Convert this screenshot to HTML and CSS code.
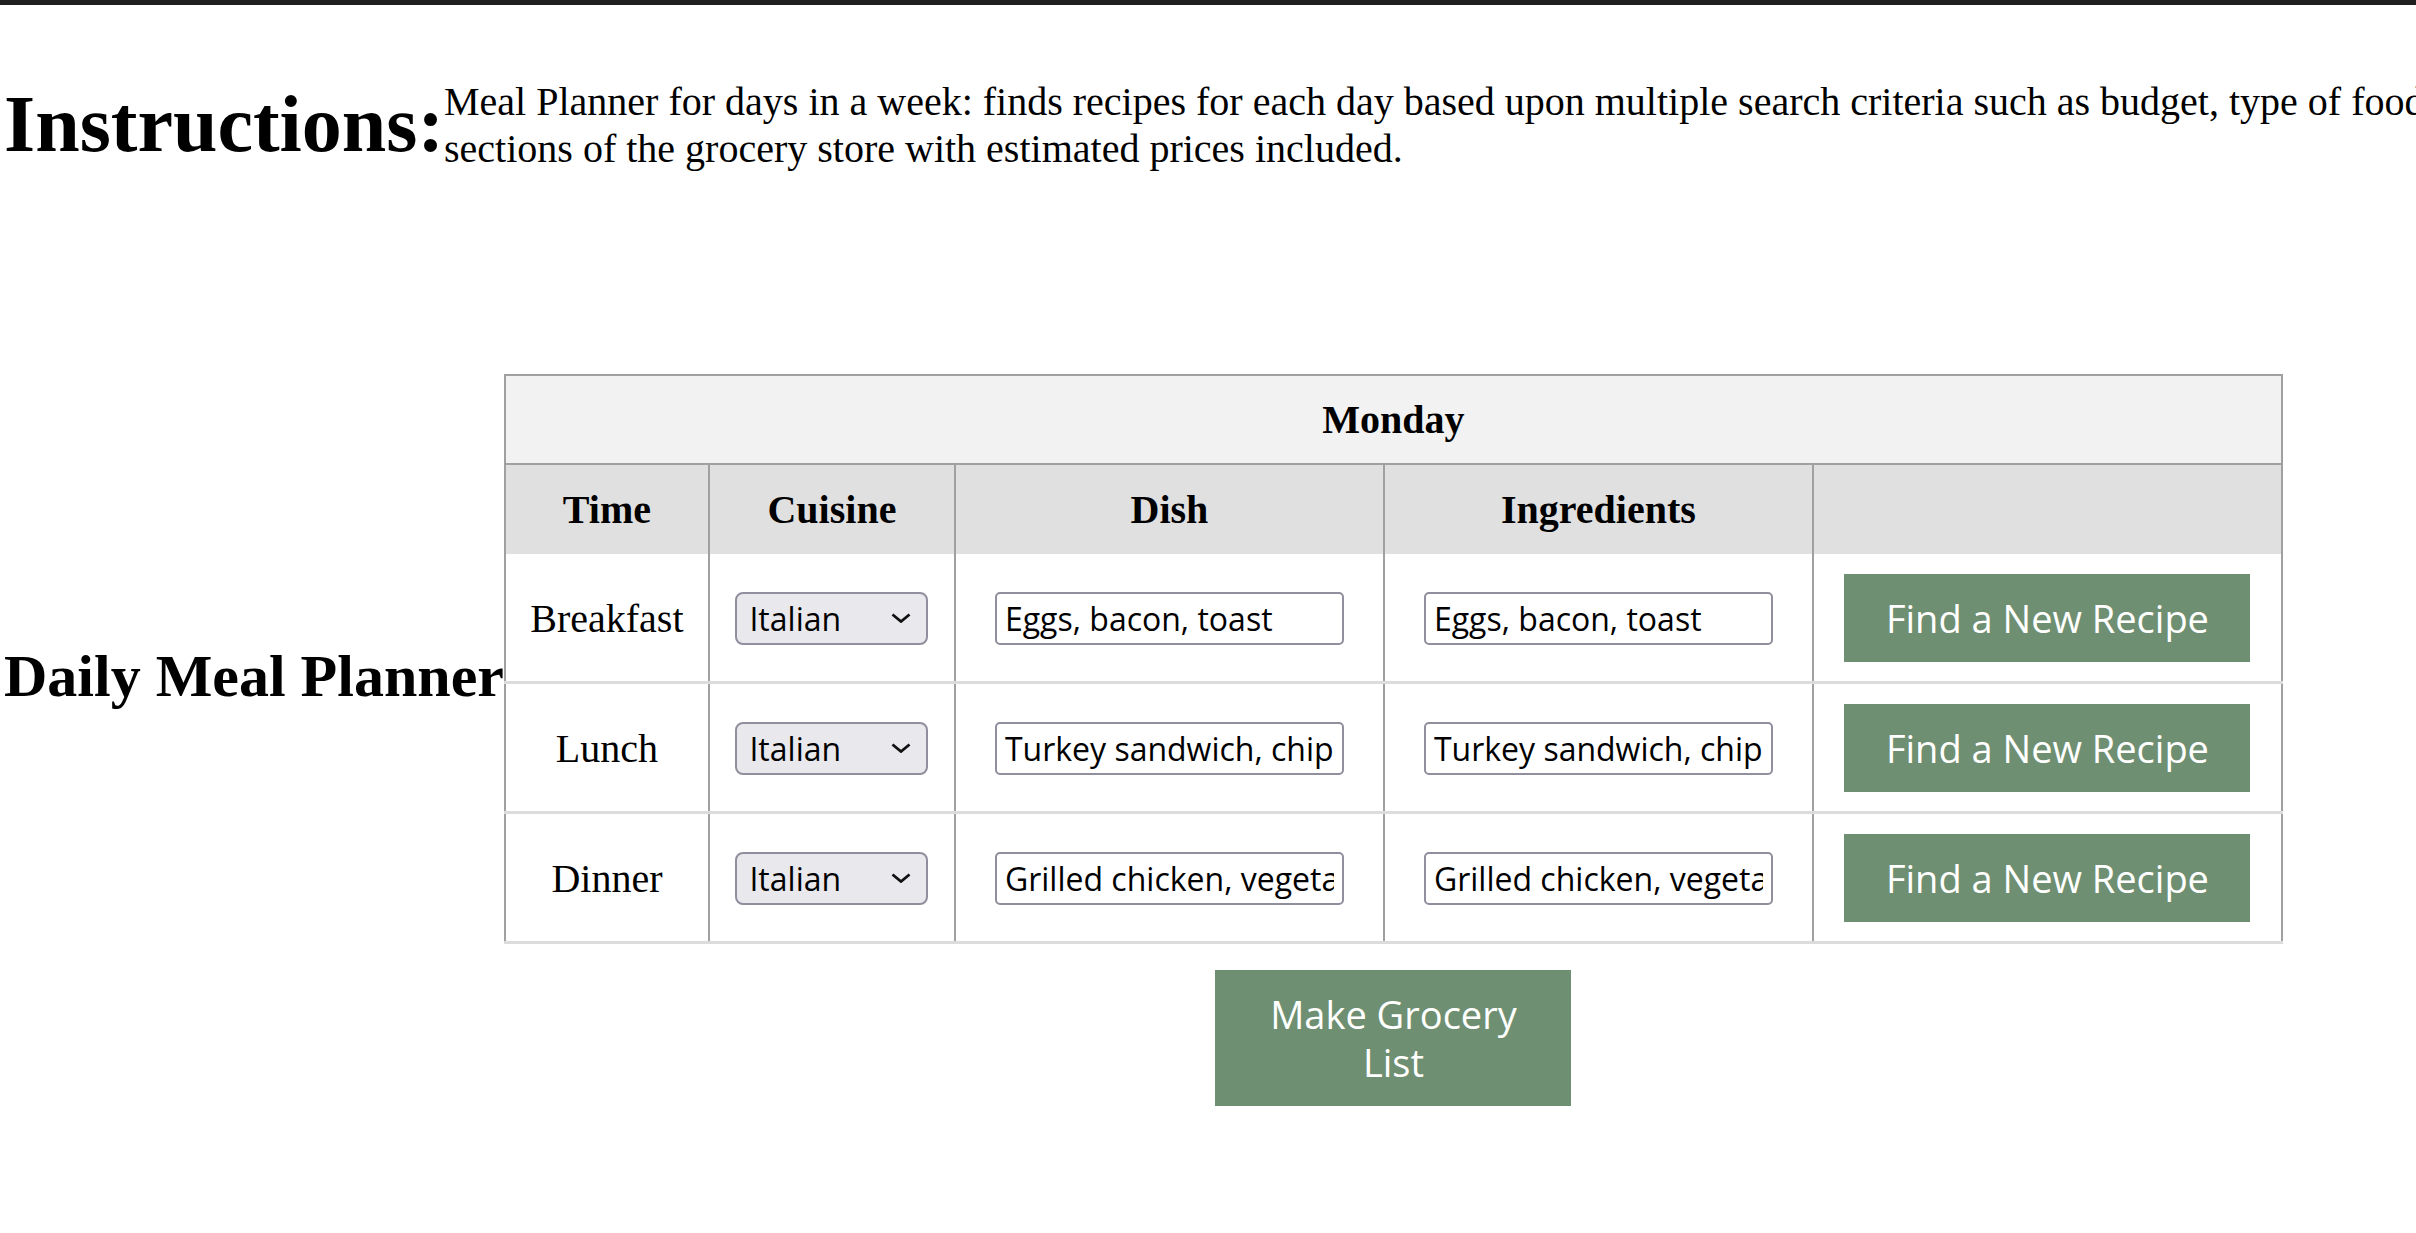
FILE: index.html
```html
<!DOCTYPE html>
<html lang="en">
<head>
<meta charset="utf-8">
<title>Daily Meal Planner</title>
<link rel="stylesheet" href="styles.css">
</head>
<body>
<div class="topbar"></div>
<header class="intro">
  <h1 class="intro-title">Instructions:</h1>
  <p class="intro-text">Meal Planner for days in a week: finds recipes for each day based upon multiple search criteria such as budget, type of food, and preparation time, then builds a grocery list sorted into<br>sections of the grocery store with estimated prices included.</p>
</header>
<main class="planner">
  <h2 class="planner-title">Daily Meal Planner</h2>
  <div class="planner-body">
    <table class="meal-table">
      <colgroup>
        <col class="col-time">
        <col class="col-cuisine">
        <col class="col-dish">
        <col class="col-ingr">
        <col class="col-action">
      </colgroup>
      <thead>
        <tr class="day-row"><th colspan="5">Monday</th></tr>
        <tr class="head-row"><th>Time</th><th>Cuisine</th><th>Dish</th><th>Ingredients</th><th></th></tr>
      </thead>
      <tbody>
        <tr>
          <td>Breakfast</td>
          <td><span class="select-wrap"><select class="cuisine-select"><option>Italian</option><option>Mexican</option><option>Chinese</option></select><svg class="chev" width="20" height="10" viewBox="0 0 20 10"><path d="M1.5 1.5 L10 8.5 L18.5 1.5" fill="none" stroke="#111" stroke-width="2.8"/></svg></span></td>
          <td><input class="text-field" type="text" value="Eggs, bacon, toast"></td>
          <td><input class="text-field" type="text" value="Eggs, bacon, toast"></td>
          <td><button class="btn btn-find">Find a New Recipe</button></td>
        </tr>
        <tr>
          <td>Lunch</td>
          <td><span class="select-wrap"><select class="cuisine-select"><option>Italian</option><option>Mexican</option><option>Chinese</option></select><svg class="chev" width="20" height="10" viewBox="0 0 20 10"><path d="M1.5 1.5 L10 8.5 L18.5 1.5" fill="none" stroke="#111" stroke-width="2.8"/></svg></span></td>
          <td><input class="text-field" type="text" value="Turkey sandwich, chips"></td>
          <td><input class="text-field" type="text" value="Turkey sandwich, chips"></td>
          <td><button class="btn btn-find">Find a New Recipe</button></td>
        </tr>
        <tr>
          <td>Dinner</td>
          <td><span class="select-wrap"><select class="cuisine-select"><option>Italian</option><option>Mexican</option><option>Chinese</option></select><svg class="chev" width="20" height="10" viewBox="0 0 20 10"><path d="M1.5 1.5 L10 8.5 L18.5 1.5" fill="none" stroke="#111" stroke-width="2.8"/></svg></span></td>
          <td><input class="text-field" type="text" value="Grilled chicken, vegetables"></td>
          <td><input class="text-field" type="text" value="Grilled chicken, vegetables"></td>
          <td><button class="btn btn-find">Find a New Recipe</button></td>
        </tr>
      </tbody>
    </table>
    <button class="btn btn-grocery">Make Grocery List</button>
  </div>
</main>
</body>
</html>
```
FILE: styles.css
```css
html, body {
  margin: 0;
  padding: 0;
}
body {
  font-family: "Liberation Serif", "Times New Roman", serif;
  color: #000;
  background: #fff;
  overflow: hidden;
}
.topbar {
  height: 5px;
  background: #202020;
}
.intro {
  display: flex;
  align-items: flex-start;
  padding-left: 4px;
  margin-top: 73px;
}
.intro-title {
  flex: none;
  margin: 1px 0 0 0;
  font-size: 80px;
  font-weight: bold;
}
.intro-text {
  flex: none;
  margin: 0;
  font-size: 40px;
  white-space: nowrap;
}
.planner {
  display: flex;
  align-items: flex-start;
  padding-left: 4px;
  margin-top: 202px;
}
.planner-title {
  flex: none;
  margin: 268px 0 0 0;
  font-size: 60px;
  font-weight: bold;
  white-space: nowrap;
}
.planner-body {
  flex: none;
  display: flex;
  flex-direction: column;
  align-items: center;
}
.meal-table {
  border-collapse: collapse;
  table-layout: fixed;
  width: 1777px;
  border: 2px solid #a0a0a0;
  font-size: 40px;
}
.col-time { width: 204px; }
.col-cuisine { width: 246px; }
.col-dish { width: 429px; }
.col-ingr { width: 429px; }
.col-action { width: 469px; }
.meal-table th,
.meal-table td {
  padding: 20px;
  text-align: center;
  vertical-align: middle;
  border-left: 2px solid #a0a0a0;
  border-right: 2px solid #a0a0a0;
}
.day-row th {
  background: #f2f2f2;
  border-bottom: 2px solid #a0a0a0;
  font-weight: bold;
}
.head-row th {
  padding: 21px 20px;
  background: #e0e0e0;
  font-weight: bold;
}
.meal-table tbody td {
  padding: 20px 20px 19px;
  border-bottom: 3px solid #dcdcdc;
}
.select-wrap {
  position: relative;
  display: block;
  width: 193px;
  margin: 0 auto;
}
.cuisine-select {
  display: block;
  -webkit-appearance: none;
  appearance: none;
  width: 193px;
  height: 53px;
  box-sizing: border-box;
  margin: 0;
  padding: 0 0 0 12px;
  background: #e9e9ed;
  border: 2px solid #8f8f9d;
  border-radius: 8px;
  font-family: "Open Sans", "Noto Sans", sans-serif;
  font-size: 32px;
  color: #000;
}
.chev {
  position: absolute;
  right: 17px;
  top: 21px;
  pointer-events: none;
}
.text-field {
  display: block;
  width: 349px;
  height: 53px;
  box-sizing: border-box;
  margin: 0 auto;
  padding: 0 8px;
  border: 2px solid #8f8f9d;
  border-radius: 5px;
  background: #fff;
  font-family: "Open Sans", "Noto Sans", sans-serif;
  font-size: 32px;
  color: #000;
}
.btn {
  box-sizing: border-box;
  border: none;
  background: #6f8f72;
  color: #fff;
  font-family: "Open Sans", "Noto Sans", sans-serif;
  font-size: 38px;
  line-height: 48px;
  padding: 20px 40px;
  cursor: pointer;
}
.btn-find {
  display: block;
  width: 406px;
  margin: 0 auto;
}
.btn-grocery {
  width: 356px;
  margin-top: 26px;
}
```
